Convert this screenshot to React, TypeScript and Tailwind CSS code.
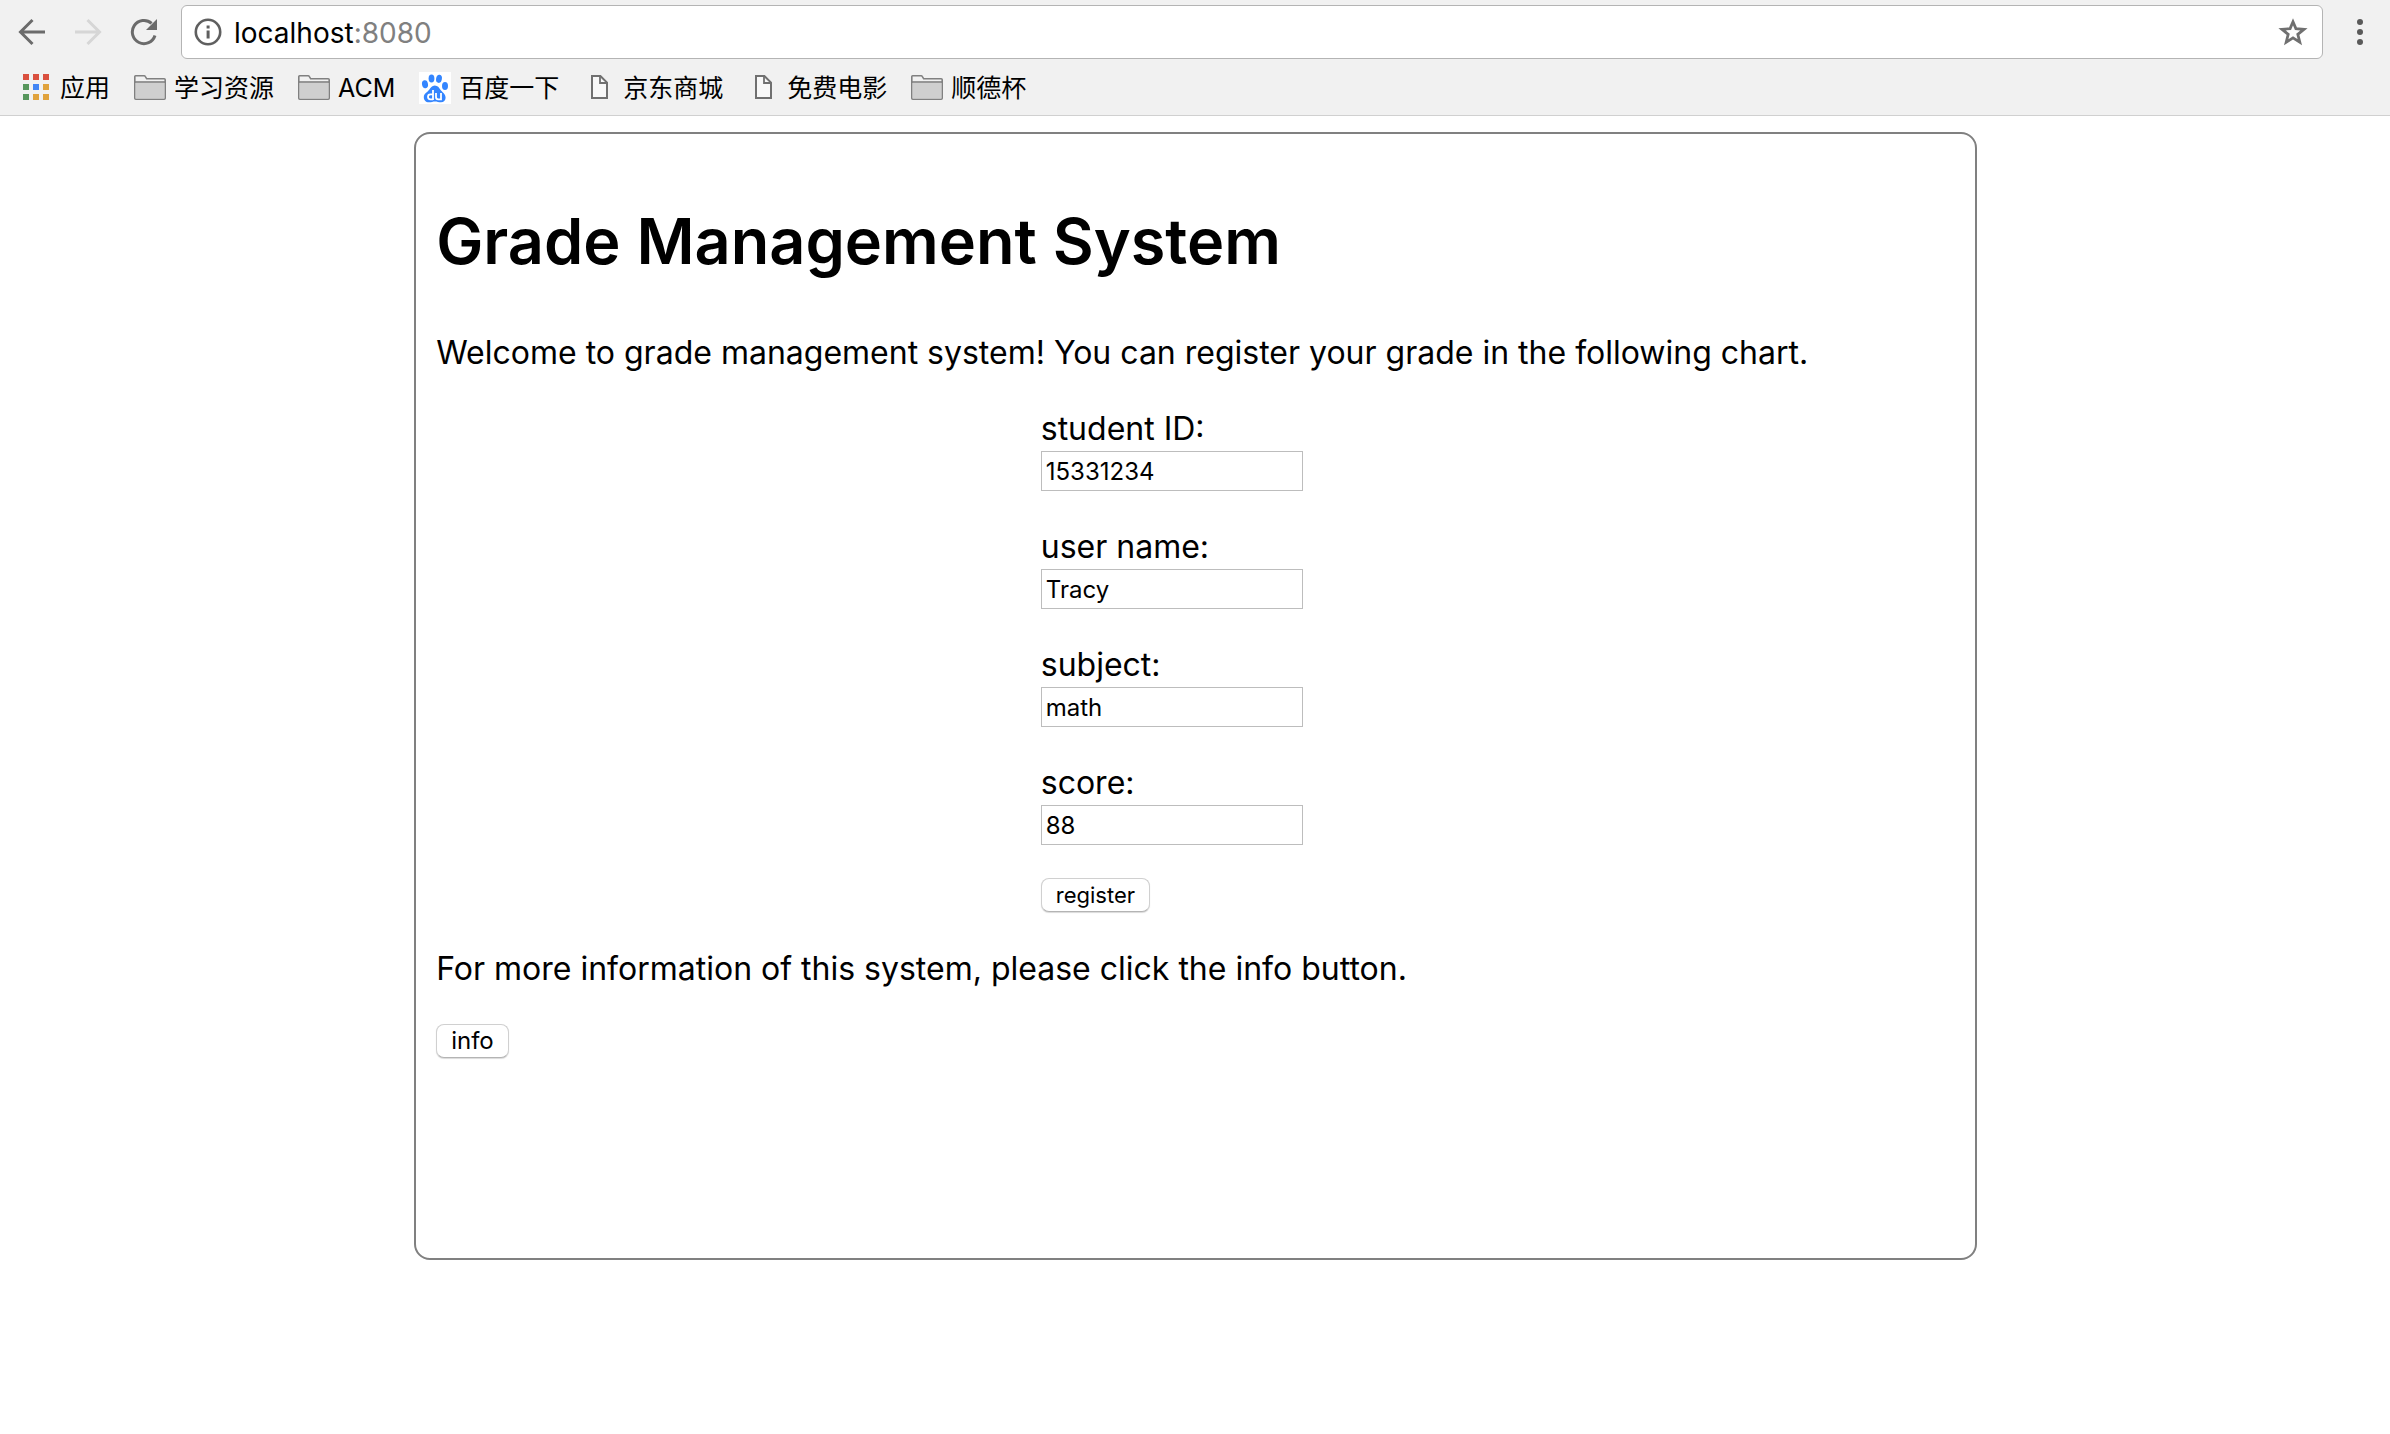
import React from "react";

function BackIcon({ className }: { className: string }) {
  return (
    <svg viewBox="0 0 28 28" className={className} fill="none" stroke="currentColor" strokeWidth="3" aria-hidden="true">
      <path d="M27 14H3M14.5 2 2.5 14l12 12" />
    </svg>
  );
}

function ReloadIcon() {
  return (
    <svg viewBox="0 0 28 28" className="size-7 text-[#6b6b6b]" aria-hidden="true">
      <path d="M21.6 5.3A11.6 11.6 0 1 0 25 17.5" fill="none" stroke="currentColor" strokeWidth="3" />
      <path d="M27 1v11H16z" fill="currentColor" />
    </svg>
  );
}

function InfoIcon() {
  return (
    <svg viewBox="0 0 28 28" className="size-7 shrink-0" aria-hidden="true">
      <circle cx="14" cy="14" r="12.2" fill="none" stroke="#5f5f5f" strokeWidth="2.6" />
      <path d="M12.6 7.4h3v3h-3zM12.6 12.4h3v8h-3z" fill="#5f5f5f" />
    </svg>
  );
}

function StarIcon() {
  return (
    <svg viewBox="0 0 30 30" className="size-[30px]" aria-hidden="true">
      <path
        d="M15 4.8 17.9 11.600 26 12.300 19.8 17.3 21.8 25.200 15 20.900 8.2 25.200 10.2 17.3 4 12.300 12.1 11.600z"
        fill="none"
        stroke="#707070"
        strokeWidth="2.8"
      />
    </svg>
  );
}

function MenuIcon() {
  return (
    <svg viewBox="0 0 6 26" className="h-[26px] w-1.5" fill="#5a5a5a" aria-hidden="true">
      <circle cx="3" cy="3" r="3" />
      <circle cx="3" cy="13" r="3" />
      <circle cx="3" cy="23" r="3" />
    </svg>
  );
}

function AppsIcon() {
  const colors = ["#d9503f", "#d9503f", "#d9503f", "#57965c", "#4285f4", "#e0a23c", "#57965c", "#e0a23c", "#e0a23c"];
  return (
    <svg viewBox="0 0 32 32" className="size-8" aria-hidden="true">
      {colors.map((c, i) => (
        <rect key={i} x={3 + (i % 3) * 10} y={2 + Math.floor(i / 3) * 10} width="6" height="6" fill={c} />
      ))}
    </svg>
  );
}

function FolderIcon() {
  return (
    <svg viewBox="0 0 32 32" className="size-8" aria-hidden="true">
      <path d="M.8 26.2V4.6q0-.8.8-.8h8.6q.7 0 1 .6l1.5 2.4h17.5q1 0 1 1v18.4q0 1-1 1H1.8q-1 0-1-1z" fill="#f1f1f1" stroke="#808080" strokeWidth="1.6" />
      <path d="M1.6 10.800h28.8v15.600H1.6z" fill="#cfcfcf" />
      <path d="M1 10h30" stroke="#808080" strokeWidth="1.6" />
    </svg>
  );
}

function FileIcon() {
  return (
    <svg viewBox="0 0 32 32" className="size-8" aria-hidden="true">
      <path d="M9 4h8.4L24 10.600V26H9z" fill="#f8f8f8" stroke="#707070" strokeWidth="2" />
      <path d="M17 4v7h7" fill="none" stroke="#707070" strokeWidth="1.8" />
    </svg>
  );
}

function BaiduIcon() {
  return (
    <svg viewBox="0 0 32 32" className="size-8" aria-hidden="true">
      <path d="M0 0h32v32H0z" fill="#fff" />
      <g fill="#3385ff">
        <ellipse cx="6" cy="12.200" rx="3" ry="4" transform="rotate(-10 6 12.200)" />
        <ellipse cx="12.500" cy="6.500" rx="2.900" ry="4.100" />
        <ellipse cx="20" cy="6.800" rx="2.900" ry="4.100" transform="rotate(10 20 6.800)" />
        <ellipse cx="26" cy="14" rx="3" ry="4" />
        <path d="M15.800 13.500c3 0 4.200 2.200 5.600 4.300 1.500 2.200 5.200 4 5.200 8 0 2.700-1.900 4.500-4.600 4.500-2.100 0-4-.8-6-.8s-3.800.8-6 .8c-3.400 0-5.200-2.400-5.200-5.100 0-3.800 3.700-5 5.400-7.400 1.400-2 2.600-4.300 5.600-4.300z" />
      </g>
      <g fill="none" stroke="#fff" strokeWidth="1.800">
        <path d="M14 18v10M14 22.300h-2.600q-2.400 0-2.400 2.500t2.400 2.500H14M17 21v4q0 2.300 2.200 2.300H22V21" />
      </g>
    </svg>
  );
}

const bookmarks = [
  { label: "应用", Icon: AppsIcon },
  { label: "学习资源", Icon: FolderIcon },
  { label: "ACM", Icon: FolderIcon },
  { label: "百度一下", Icon: BaiduIcon },
  { label: "京东商城", Icon: FileIcon },
  { label: "免费电影", Icon: FileIcon },
  { label: "顺德杯", Icon: FolderIcon },
];

const fields = [
  { id: "student-id", label: "student ID:", value: "15331234" },
  { id: "user-name", label: "user name:", value: "Tracy" },
  { id: "subject", label: "subject:", value: "math" },
  { id: "score", label: "score:", value: "88" },
];

const buttonClass =
  "block h-[34px] rounded-lg border border-[#d0d0d0] border-b-[#b4b4b4] bg-white px-3.5 leading-8 shadow-[0_1px_1px_rgba(0,0,0,0.15)]";

export default function App() {
  return (
    <div className="min-h-screen bg-white font-['Inter','Noto_Sans_CJK_SC',sans-serif] text-black">
      <header className="border-b border-[#d0d0d0] bg-[#f1f1f1]">
        <div className="flex items-center pt-[5px] pl-[18px]">
          <button aria-label="Back" className="mr-7">
            <BackIcon className="size-7 text-[#6b6b6b]" />
          </button>
          <button aria-label="Forward" disabled className="mr-7">
            <BackIcon className="size-7 rotate-180 text-[#d6d6d6]" />
          </button>
          <button aria-label="Reload" className="mr-[23px]">
            <ReloadIcon />
          </button>
          <div className="flex h-[54px] flex-1 items-center rounded-md border border-[#b4b4b4] bg-white pr-3.5 pl-3">
            <InfoIcon />
            <div className="ml-3 flex-1 pt-0.5 text-[28px] leading-9">
              localhost<span className="text-[#808080]">:8080</span>
            </div>
            <button aria-label="Bookmark this page">
              <StarIcon />
            </button>
          </div>
          <button aria-label="Menu" className="mr-[27px] ml-[34px]">
            <MenuIcon />
          </button>
        </div>
        <nav className="flex h-14 items-center gap-6 pt-0.5 pl-5">
          {bookmarks.map(({ label, Icon }) => (
            <a key={label} href="#" className="flex items-center gap-2 text-[25px] leading-9 whitespace-nowrap">
              <Icon />
              {label}
            </a>
          ))}
        </nav>
      </header>

      <main className="mt-4 ml-[17.33%] w-[65.4%] rounded-2xl border-2 border-[#808080] px-5 pt-[62px] pb-50">
        <h1 className="text-[63px] leading-[90px] font-semibold">Grade Management System</h1>
        <p className="mt-11 text-[32px] leading-[46px]">
          Welcome to grade management system! You can register your grade in the following chart.
        </p>
        <form className="mt-[30px] ml-[39.8%]" onSubmit={(e) => e.preventDefault()}>
          {fields.map(({ id, label, value }) => (
            <div key={id} className="mb-[33px]">
              <label htmlFor={id} className="block text-[32px] leading-[45px]">
                {label}
              </label>
              <input id={id} defaultValue={value} className="block h-10 w-[262px] border border-[#bdbdbd] px-1 text-2xl" />
            </div>
          ))}
          <button type="submit" className={buttonClass + " text-[22px]"}>
            register
          </button>
        </form>
        <p className="mt-[34px] text-[32px] leading-[46px]">
          For more information of this system, please click the info button.
        </p>
        <button type="button" className={buttonClass + " mt-8 text-[24px]"}>
          info
        </button>
      </main>
    </div>
  );
}
